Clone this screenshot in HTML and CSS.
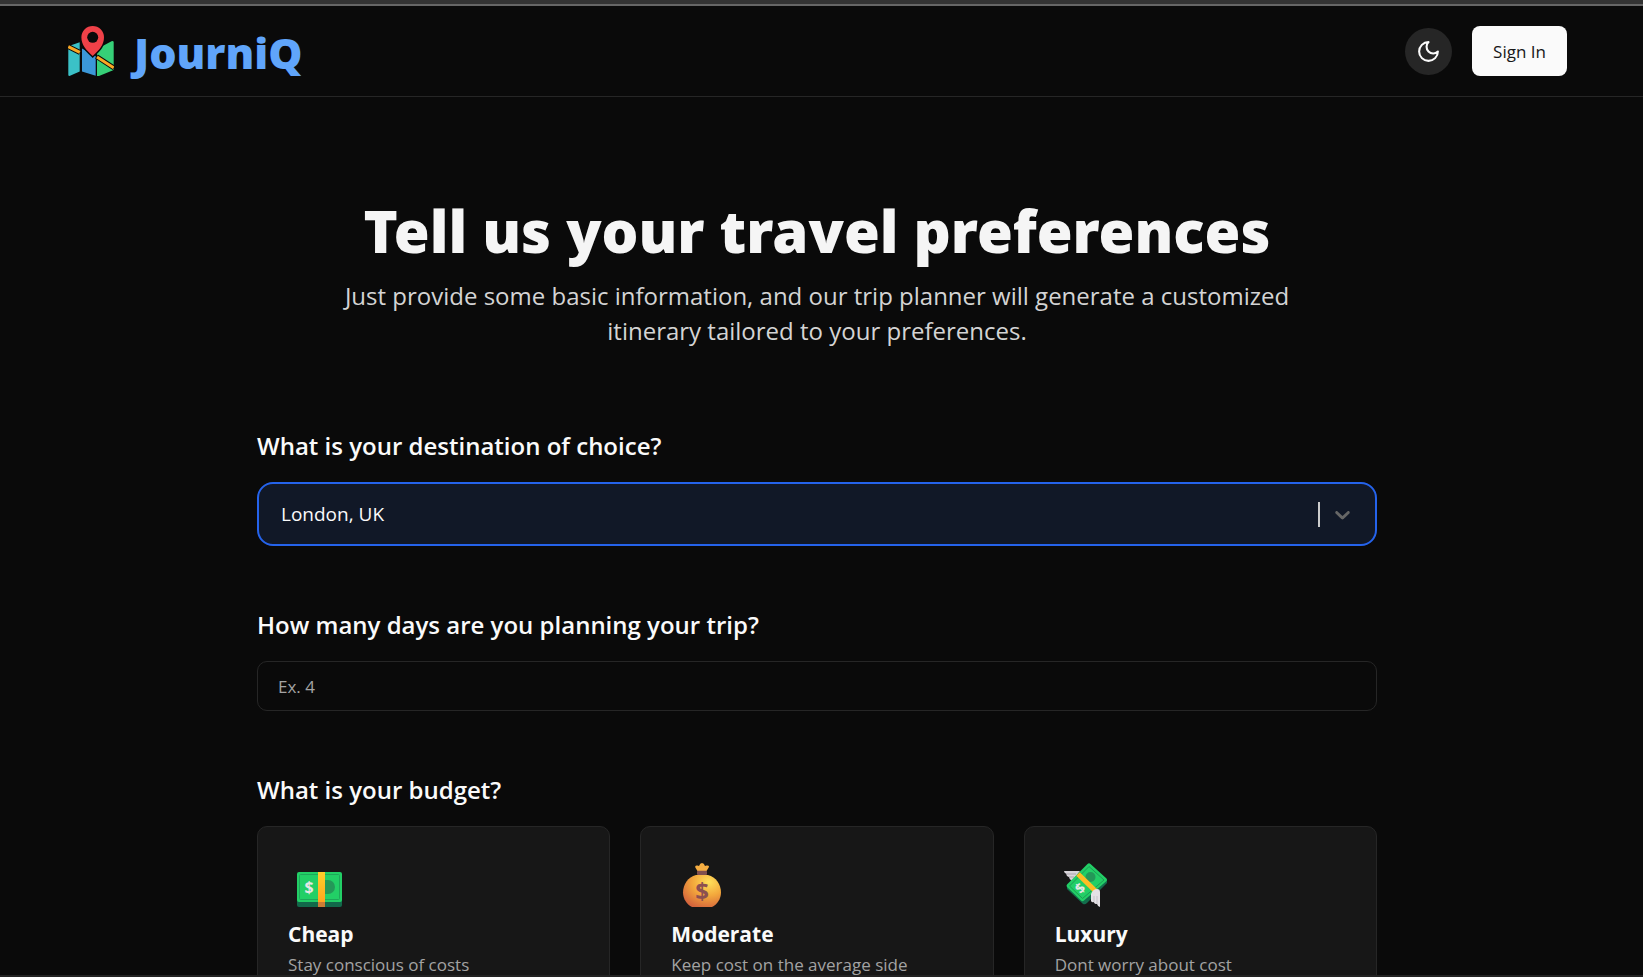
FILE: index.html
```html
<!DOCTYPE html>
<html lang="en">
<head>
    <meta charset="UTF-8">
    <meta name="viewport" content="width=device-width, initial-scale=1.0">
    <title>JourniQ</title>
    <link rel="stylesheet" href="styles.css">
</head>
<body>
    <header class="header">
        <a href="#" class="logo">
            <svg class="logo-icon" viewBox="0 0 46 50" aria-hidden="true">
                <path fill="#3bc1c7" d="M1 20 11.700 16.300V45.500L1.500 50Q.3 50 .3 49V21Z"/>
                <path fill="#3b97d8" d="M14 22.500 27.700 30V49.700L14 45.500Z"/>
                <path fill="#36d077" d="M29 23 43.500 15.200Q45.700 14.500 45.700 16.500V43Q45.700 44 44.500 44.500L31 50H29Z"/>
                <path stroke="#0a0a0a" stroke-width="5" d="M0 20.500 12 26.500M28.500 30.500 46 42"/>
                <path stroke="#f9a825" stroke-width="3" d="M.3 20.700 11.800 26.300M29 31 45.700 41.800"/>
                <path fill="#ef4148" stroke="#0a0a0a" stroke-width="3" paint-order="stroke" d="M24.700 0A11.300 11.300 0 0 0 13.400 11.300C13.400 19 18 24 24.700 30 31.400 24 36 19 36 11.300A11.300 11.300 0 0 0 24.700 0Z"/>
                <circle cx="24.700" cy="11.300" r="5.500" fill="#0a0a0a"/>
            </svg>
            <span class="logo-text">JourniQ</span>
        </a>
        <div class="header-actions">
            <button type="button" class="theme-btn" aria-label="Toggle theme">
                <svg viewBox="0 0 24 24" fill="none" stroke="currentColor" stroke-width="2" stroke-linecap="round" stroke-linejoin="round">
                    <path d="M12 3a6 6 0 0 0 9 9 9 9 0 1 1-9-9Z"/>
                </svg>
            </button>
            <button type="button" class="sign-in-btn">Sign In</button>
        </div>
    </header>

    <main class="main-content">
        <div class="intro">
            <h1>Tell us your travel preferences</h1>
            <p class="subtitle">Just provide some basic information, and our trip planner will generate a customized itinerary tailored to your preferences.</p>
        </div>

        <form class="trip-form">
            <div class="field">
                <label for="destination" class="question">What is your destination of choice?</label>
                <div class="select-box">
                    <select id="destination">
                        <option>London, UK</option>
                    </select>
                    <div class="select-indicator">
                        <span class="separator"></span>
                        <svg viewBox="0 0 20 20" aria-hidden="true">
                            <path d="M4.516 7.548c0.436-0.446 1.043-0.481 1.576 0l3.908 3.747 3.908-3.747c0.533-0.481 1.141-0.446 1.574 0 0.436 0.445 0.408 1.197 0 1.615-0.406 0.418-4.695 4.502-4.695 4.502-0.217 0.223-0.502 0.335-0.787 0.335s-0.570-0.112-0.789-0.335c0 0-4.287-4.084-4.695-4.502s-0.436-1.170 0-1.615z"/>
                        </svg>
                    </div>
                </div>
            </div>

            <div class="field">
                <label for="days" class="question">How many days are you planning your trip?</label>
                <input type="number" id="days" placeholder="Ex. 4">
            </div>

            <div class="field">
                <h2 class="question">What is your budget?</h2>
                <div class="budget-grid">
                    <button type="button" class="card">
                        <svg viewBox="0 0 48 48" aria-hidden="true">
                            <defs>
                                <linearGradient id="band" x1="0" y1="0" x2="0" y2="1">
                                    <stop offset="0" stop-color="#ffd02a"/>
                                    <stop offset="1" stop-color="#ffa61f"/>
                                </linearGradient>
                            </defs>
                            <rect x="2" y="16" width="45" height="30" rx="2" fill="#12694a"/>
                            <rect x="2" y="11" width="45" height="30" rx="2" fill="#22cf66"/>
                            <rect x="4.500" y="13.500" width="40" height="25" rx="1" fill="none" stroke="#1fa75a"/>
                            <path fill="#249858" d="M30 19h3a7 7 0 0 1 0 14h-3z"/>
                            <rect x="23" y="11" width="7" height="30" fill="url(#band)"/>
                            <rect x="23" y="41" width="7" height="5" fill="#cb7d35"/>
                            <text x="14" y="32" class="dollar" font-size="16" fill="#e6e6e6">$</text>
                        </svg>
                        <span class="card-title">Cheap</span>
                        <span class="card-text">Stay conscious of costs</span>
                    </button>
                    <button type="button" class="card">
                        <svg viewBox="0 0 48 48" aria-hidden="true">
                            <defs>
                                <radialGradient id="bag" cx=".68" cy=".22" r=".85">
                                    <stop offset="0" stop-color="#ffe05a"/>
                                    <stop offset=".5" stop-color="#f3a83c"/>
                                    <stop offset="1" stop-color="#d5653c"/>
                                </radialGradient>
                            </defs>
                            <path fill="#f6ae42" d="M19.500 10 17.300 6.500Q16.500 4 19.500 4.500L21 5Q22 2 24 2T27 5L28.500 4.500Q31.800 4 30.700 6.500L28.500 10Z"/>
                            <path fill="url(#bag)" d="M18 14H30C38 16 43 23.500 43 31.500 43 38 39 43 35 45.500Q34 46 32.500 46H15.500Q14 46 13 45.500C9 43 5 38 5 31.500 5 23.500 10 16 18 14Z"/>
                            <rect x="19" y="9.700" width="10" height="4.300" rx="1" fill="#81504e"/>
                            <text x="24" y="39" class="dollar" font-size="24" fill="#8c5050">$</text>
                        </svg>
                        <span class="card-title">Moderate</span>
                        <span class="card-text">Keep cost on the average side</span>
                    </button>
                    <button type="button" class="card">
                        <svg viewBox="0 0 48 48" aria-hidden="true">
                            <path fill="#d8d5da" d="M2 10H18L10 20Q7 18 7 16 4 15 4.500 13 2 12 2 10Z"/>
                            <path stroke="#aaa5ac" d="M4.500 13H14M7 16H12"/>
                            <path fill="#136d4c" d="M5 25V28L21 43Q23 44 25 42L45 22V18Z"/>
                            <path fill="#22cf66" d="M25.500 3Q27 1.500 28.500 3L44.500 17.500Q45.500 19 44.500 20L22 39.500Q20.500 41 19 39.500L5 26Q4 24.500 5 23.500Z"/>
                            <path fill="none" stroke="#1d9b54" d="M27 5.500 42 19 20.500 37.500 7.500 25Z"/>
                            <circle cx="28.500" cy="16" r="5" fill="#249858"/>
                            <path stroke="#ffbd24" stroke-width="5" d="M16 13 34.500 31"/>
                            <text x="18" y="32" class="dollar" font-size="14" fill="#e6e6e6" transform="rotate(-45 18 27)">$</text>
                            <path fill="#e5e2e6" d="M29 40V33Q31 28 35 28 38 28 38 31V46Q36 46 35 43 32 43 32 41 30 42 29 40Z"/>
                            <path stroke="#aaa5ac" stroke-width=".5" d="M32 41V35M35 43V35"/>
                        </svg>
                        <span class="card-title">Luxury</span>
                        <span class="card-text">Dont worry about cost</span>
                    </button>
                </div>
            </div>
        </form>
    </main>
</body>
</html>
```

FILE: styles.css
```css
* {
    margin: 0;
    padding: 0;
    box-sizing: border-box;
}

body {
    background: #0a0a0a;
    color: #fafafa;
    font-family: "Segoe UI", "Open Sans", "Noto Sans", sans-serif;
    height: 100vh;
    display: flex;
    flex-direction: column;
    border-top: 4px solid #333333;
    border-bottom: 2px solid #222222;
}

button,
input,
select {
    font-family: inherit;
    color: inherit;
}

/* Header */
.header {
    display: flex;
    align-items: center;
    justify-content: space-between;
    padding: 20px 76px 20px 68px;
    border-top: 2px solid #666666;
    border-bottom: 1px solid #262626;
}

.logo {
    display: flex;
    align-items: center;
    gap: 20px;
    height: 50px;
    color: #60a5fa;
    font-family: "Segoe UI", "Noto Sans", sans-serif;
    font-size: 43px;
    font-weight: 900;
    line-height: 50px;
    text-decoration: none;
}

.logo-icon {
    width: 46px;
    height: 50px;
}

.logo-text {
    padding-top: 4px;
}

.header-actions {
    display: flex;
    align-items: center;
    gap: 20px;
}

.theme-btn {
    display: flex;
    align-items: center;
    justify-content: center;
    width: 47px;
    height: 47px;
    border: none;
    border-radius: 50%;
    background: #262626;
    cursor: pointer;
}

.theme-btn svg {
    width: 25px;
    height: 25px;
}

.sign-in-btn {
    min-width: 95px;
    height: 50px;
    padding: 0 16px;
    border: none;
    border-radius: 8px;
    background: #fafafa;
    color: #171717;
    font-size: 17px;
    font-weight: 500;
    cursor: pointer;
}

/* Page content */
.main-content {
    flex: 1;
    min-height: 0;
    overflow-y: auto;
    scrollbar-width: none;
    padding: 96px 77px 60px 68px;
}

.intro {
    max-width: 960px;
    margin: 0 auto 81px;
    text-align: center;
}

h1 {
    color: #f5f5f5;
    font-family: "Segoe UI", "Noto Sans", sans-serif;
    font-size: 58px;
    font-weight: 900;
    line-height: 75px;
    margin-bottom: 10px;
}

.subtitle {
    color: #d4d4d4;
    font-size: 24px;
    line-height: 35px;
}

/* Trip form */
.trip-form {
    display: flex;
    flex-direction: column;
    gap: 62px;
    max-width: 1120px;
    margin: 0 auto;
}

.question {
    display: block;
    margin-bottom: 19px;
    font-size: 24px;
    font-weight: 600;
    line-height: 34px;
}

.select-box {
    position: relative;
}

.select-box select {
    appearance: none;
    width: 100%;
    height: 64px;
    padding: 0 22px;
    border: 2px solid #2563eb;
    border-radius: 16px;
    background: #111827;
    font-size: 19px;
    outline: none;
}

/* Separator and arrow lie over the select */
.select-indicator {
    position: absolute;
    top: 0;
    right: 22px;
    height: 100%;
    display: flex;
    align-items: center;
    gap: 10px;
    pointer-events: none;
}

.separator {
    width: 2px;
    height: 25px;
    background: #cccccc;
}

.select-indicator svg {
    width: 25px;
    height: 25px;
    fill: #666666;
}

.trip-form input {
    appearance: textfield;
    display: block;
    width: 100%;
    height: 50px;
    padding: 0 20px;
    border: 1px solid #262626;
    border-radius: 10px;
    background: transparent;
    font-size: 17px;
}

.trip-form input::placeholder {
    color: #a3a3a3;
}

/* Budget cards */
.budget-grid {
    display: grid;
    grid-template-columns: repeat(3, 1fr);
    gap: 30px;
}

.card {
    display: flex;
    flex-direction: column;
    align-items: flex-start;
    padding: 34px 30px;
    border: 1px solid #262626;
    border-radius: 10px;
    background: #171717;
    text-align: left;
    cursor: pointer;
}

.card svg {
    width: 48px;
    height: 48px;
    margin: 0 7px 8px;
}

.dollar {
    font-weight: 700;
    text-anchor: middle;
}

.card-title {
    font-size: 21px;
    font-weight: 700;
    line-height: 34px;
}

.card-text {
    color: #a3a3a3;
    font-size: 17px;
    line-height: 28px;
}
```
